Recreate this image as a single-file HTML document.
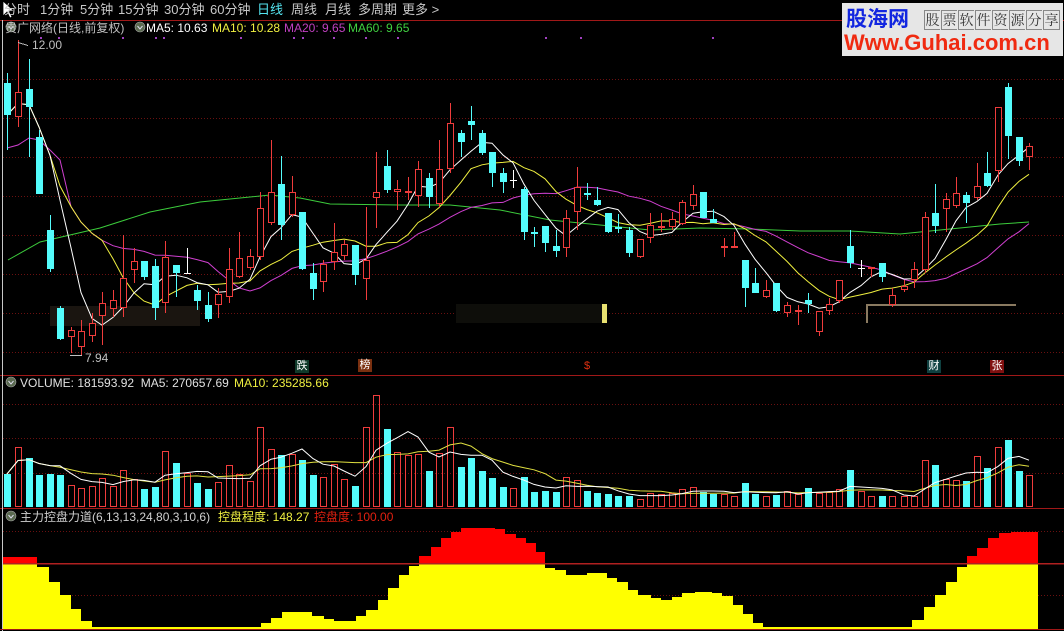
<!DOCTYPE html>
<html><head><meta charset="utf-8">
<style>
html,body{margin:0;padding:0;background:#000;width:1064px;height:631px;overflow:hidden}
body{position:relative;font-family:"Liberation Sans","Noto Sans CJK SC",sans-serif}
svg{position:absolute;left:0;top:0}
.t{position:absolute;white-space:nowrap;font-size:12px;line-height:14px}
.logo{position:absolute;left:842px;top:3px;width:221px;height:53px;background:#e6e6e6;overflow:hidden}
.lb{position:absolute;left:4px;top:3px;font:bold 21px "Noto Sans CJK SC",sans-serif;color:#1226e0;line-height:24px}
.lr{position:absolute;left:82px;top:7px;display:flex}
.lr span{display:block;width:15px;height:18px;border:1px solid #888;border-right:none;font:14px "Noto Serif CJK SC",serif;color:#333;line-height:18px;text-align:center;margin-right:1px}
.lr span:last-child{border-right:1px solid #888}
.lu{position:absolute;left:2px;top:28px;font:bold 22px "Liberation Sans",sans-serif;color:#f02a10;line-height:24px}
.tag{position:absolute;font-size:11px;line-height:13px;width:14px;text-align:center;color:#fff}
</style></head><body>
<svg id="s" width="1064" height="631" xmlns="http://www.w3.org/2000/svg" shape-rendering="crispEdges"></svg>

<div class="t" style="left:4px;top:2px;font-size:13px;line-height:16px;color:#c8c8c8">
<span style="position:absolute;left:0">分时</span>
<span style="position:absolute;left:36px">1分钟</span>
<span style="position:absolute;left:76px">5分钟</span>
<span style="position:absolute;left:114px">15分钟</span>
<span style="position:absolute;left:160px">30分钟</span>
<span style="position:absolute;left:206px">60分钟</span>
<span style="position:absolute;left:253px;color:#54e4f0">日线</span>
<span style="position:absolute;left:287px">周线</span>
<span style="position:absolute;left:321px">月线</span>
<span style="position:absolute;left:354px">多周期</span>
<span style="position:absolute;left:398px">更多 &gt;</span>
</div>
<div class="t" style="left:5px;top:21px;color:#c0c0c0">贵广网络(日线,前复权)</div>
<div class="t" style="left:146px;top:21px;color:#fff">MA5: 10.63</div>
<div class="t" style="left:212px;top:21px;color:#f0f040">MA10: 10.28</div>
<div class="t" style="left:284px;top:21px;color:#c040c0">MA20: 9.65</div>
<div class="t" style="left:348px;top:21px;color:#40d040">MA60: 9.65</div>
<div class="t" style="left:32px;top:38px;color:#c0c0c0">12.00</div>
<div class="t" style="left:85px;top:351px;color:#c0c0c0">7.94</div>
<div class="t" style="left:20px;top:376px;color:#e0e0e0">VOLUME: 181593.92 &nbsp;MA5: 270657.69</div>
<div class="t" style="left:234px;top:376px;color:#f0f040">MA10: 235285.66</div>
<div class="t" style="left:20px;top:510px;color:#d0d0d0">主力控盘力道(6,13,13,24,80,3,10,6)</div>
<div class="t" style="left:218px;top:510px;color:#f0f040">控盘程度: 148.27</div>
<div class="t" style="left:314px;top:510px;color:#e02010">控盘度: 100.00</div>

<div class="tag" style="left:295px;top:360px;background:#0f3a2a">跌</div>
<div class="tag" style="left:358px;top:359px;background:#7a3010">榜</div>
<div class="tag" style="left:580px;top:360px;color:#e03010;background:none">$</div>
<div class="tag" style="left:927px;top:360px;background:#0f4040">财</div>
<div class="tag" style="left:990px;top:360px;background:#801010">张</div>

<div class="logo">
<div class="lb">股海网</div>
<div class="lr"><span>股</span><span>票</span><span>软</span><span>件</span><span>资</span><span>源</span><span>分</span><span>享</span></div>
<div class="lu">Www.Guhai.com.cn</div>
</div>

<script>
var s=document.getElementById('s'),h='';
function L(x1,y1,x2,y2,c,w,d){h+='<line x1="'+x1+'" y1="'+y1+'" x2="'+x2+'" y2="'+y2+'" stroke="'+c+'" stroke-width="'+(w||1)+'"'+(d?' stroke-dasharray="'+d+'"':'')+'/>';}
function R(x,y,w,hh,f){h+='<rect x="'+x+'" y="'+y+'" width="'+w+'" height="'+hh+'" fill="'+f+'"/>';}
function HR(x,y,w,hh,c){R(x,y,w,1,c);R(x,y+hh-1,w,1,c);R(x,y,1,hh,c);R(x+w-1,y,1,hh,c);}
[79,118,157,196,235,274,313,352].forEach(function(y){L(3,y+.5,1064,y+.5,'#6a1010',1,'1 2');});
[404,438,473].forEach(function(y){L(3,y+.5,1064,y+.5,'#6a1010',1,'1 2');});
[531,595].forEach(function(y){L(3,y+.5,1064,y+.5,'#6a1010',1,'1 2');});
L(0,20.5,1064,20.5,'#a01818',1);L(0,375.5,1064,375.5,'#a01818',1);L(0,508.5,1064,508.5,'#a01818',1);
L(2.5,20,2.5,631,'#c8c8c8',1);
[40,58,122,155,163,240,293,302,333,365,397,545,580,712].forEach(function(x){R(x,37,2,2,'#a040c0');});
R(456,304,148,19,'#0e0e0a');R(602,304,5,19,'#e8e070');
R(866,304,150,2,'#8a7a60');R(866,304,2,19,'#8a7a60');
R(50,306,150,20,'#1a1510');
var C=[[7,83,115,73,150,'c'],[18,92,117,40,127,'r'],[29,89,107,59,157,'c'],[39,137,194,130,194,'c'],[50,230,269,215,272,'c'],[60,308,339,306,340,'c'],[71,330,337,327,353,'r'],[81,331,347,320,355,'r'],[92,323,336,313,342,'r'],[102,303,316,292,345,'r'],[113,300,309,290,317,'r'],[123,278,308,235,317,'r'],[134,261,270,248,283,'r'],[144,261,277,261,280,'c'],[155,266,308,259,320,'c'],[165,257,303,241,313,'r'],[176,265,273,265,297,'c'],[187,273,274,248,274,'w'],[197,290,301,285,310,'c'],[208,305,319,292,322,'c'],[218,294,305,288,318,'r'],[229,269,297,248,303,'r'],[239,258,277,232,278,'r'],[250,256,268,249,270,'r'],[260,208,257,192,260,'r'],[271,192,223,140,225,'r'],[281,184,225,156,240,'c'],[292,192,215,176,217,'r'],[302,212,269,212,270,'c'],[313,273,289,263,300,'c'],[323,264,282,260,292,'r'],[334,252,262,223,270,'r'],[344,244,256,240,260,'r'],[355,245,275,245,285,'c'],[366,260,279,207,300,'r'],[376,192,198,152,228,'r'],[387,166,190,150,193,'c'],[397,189,192,180,210,'r'],[408,191,193,177,200,'r'],[418,169,196,161,207,'r'],[429,178,197,173,208,'c'],[439,169,204,140,207,'r'],[450,123,169,103,173,'r'],[461,133,142,130,157,'c'],[471,121,125,106,140,'c'],[482,133,153,130,155,'c'],[492,152,173,152,187,'c'],[503,173,182,168,193,'c'],[513,180,181,170,188,'w'],[524,189,232,187,240,'c'],[534,232,234,227,247,'c'],[545,226,243,226,252,'c'],[556,246,251,230,257,'c'],[566,218,248,210,257,'r'],[577,187,212,167,230,'r'],[587,193,195,183,200,'c'],[597,200,205,187,206,'c'],[608,213,232,213,233,'c'],[618,227,229,214,233,'c'],[629,230,253,227,257,'c'],[640,239,257,239,258,'r'],[650,225,238,213,243,'r'],[661,226,228,213,232,'r'],[672,219,227,212,230,'r'],[682,202,224,200,225,'r'],[693,194,206,185,210,'r'],[703,192,218,192,218,'c'],[713,219,223,209,223,'c'],[724,246,248,238,257,'r'],[734,246,248,232,248,'r'],[745,260,288,260,307,'c'],[755,283,293,268,293,'c'],[766,290,297,280,298,'r'],[776,283,311,283,312,'c'],[787,305,313,302,317,'r'],[798,310,312,305,325,'r'],[808,300,304,293,313,'c'],[819,311,332,311,336,'r'],[829,304,311,298,315,'r'],[839,280,301,280,303,'r'],[850,246,263,230,268,'c'],[861,268,270,260,277,'w'],[871,267,269,267,277,'r'],[882,263,277,263,282,'c'],[892,295,305,288,307,'r'],[904,286,290,280,292,'r'],[914,269,280,262,288,'r'],[925,217,270,212,273,'r'],[935,213,226,184,233,'c'],[946,199,209,193,232,'r'],[956,193,206,177,208,'r'],[966,195,203,192,223,'c'],[977,186,198,163,200,'r'],[987,173,186,152,187,'c'],[998,107,171,107,182,'r'],[1008,87,136,83,159,'c'],[1019,137,161,137,166,'c'],[1029,146,157,143,170,'r']];
var V=[474,447,458,475,474,475,485,488,486,478,486,470,479,489,487,451,463,473,483,489,482,465,474,481,427,449,455,454,460,475,477,464,479,486,427,395,429,452,455,454,471,453,427,467,458,471,478,487,488,477,492,491,492,477,480,491,493,494,496,496,499,493,494,493,489,487,492,494,494,496,483,494,496,495,491,494,488,493,492,489,470,491,496,496,496,496,496,460,465,479,480,481,456,468,447,440,471,475];
var RED='#f03c3c',CY='#54fcfc';
var cl=C.map(function(c){return c[5]=='r'?c[1]:c[2];});
function ma(arr,n){return arr.map(function(v,i){var a=Math.max(0,i-n+1),sum=0;for(var k=a;k<=i;k++)sum+=arr[k];return sum/(i-a+1);});}
function PL(xs,ys,c){var p=xs.map(function(x,i){return x+','+ys[i].toFixed(1);}).join(' ');h+='<polyline shape-rendering="auto" points="'+p+'" fill="none" stroke="'+c+'" stroke-width="1"/>';}
var xs=C.map(function(c){return c[0];});
h+='<polyline shape-rendering="auto" points="8,260 40,242 100,228 150,212 200,202 270,195 300,198 330,204 400,205 450,205 500,210 550,220 600,225 650,230 700,228 750,229 800,231 850,231 900,234 950,229 1000,224 1029,222" fill="none" stroke="#3ccc3c"/>';
var m20=ma(cl,20);for(var i=0;i<6;i++)m20[i]=[148,145,138,140,150,160][i];
PL(xs,m20,'#d040d0');
PL(xs,ma(cl,10),'#f0f040');
PL(xs,ma(cl,5),'#ffffff');
C.forEach(function(c,i){
 var x=c[0],col=c[5]=='r'?RED:(c[5]=='c'?CY:'#fff');
 R(x,c[3],1,c[4]-c[3],col);
 if(c[5]=='c'){R(x-3,c[1],7,Math.max(1,c[2]-c[1]),CY);}
 else if(c[5]=='r'){ if(c[2]-c[1]<3){R(x-3,c[1],7,2,RED);} else {R(x-3,c[1],7,c[2]-c[1],'#000');R(x,c[3],1,c[1]-c[3],RED);R(x,c[2],1,c[4]-c[2],RED);HR(x-3,c[1],7,c[2]-c[1],RED);}}
 else {R(x-3,c[1],7,1,'#fff');}
 var t=V[i];
 if(c[5]=='c')R(x-3,t,7,507-t,CY); else HR(x-3,t,7,507-t,RED);
});
PL(xs,ma(V,10),'#e0e040');PL(xs,ma(V,5),'#ffffff');
L(18,42.5,28,45.5,'#c0c0c0');L(70,355.5,82,355.5,'#c0c0c0');
var st=[[3,563,557],[37,567],[49,582],[60,595],[71,609],[81,621],[92,627],[261,623],[271,618],[282,612],[312,616],[324,619],[334,621],[356,616],[366,610],[378,600],[388,588],[399,575],[409,566],[419,563,556],[431,563,547],[441,563,538],[451,563,532],[461,563,528],[495,563,529],[505,563,534],[516,563,538],[526,563,543],[536,563,552],[545,568],[555,570],[566,575],[587,573],[607,578],[617,582],[628,590],[638,595],[651,598],[661,600],[672,597],[682,593],[695,592],[712,593],[722,596],[733,605],[743,614],[753,623],[763,627],[912,620],[924,607],[935,595],[946,582],[957,567],[967,563,556],[977,563,548],[988,563,538],[999,563,533],[1011,563,532],[1038,0]];
for(var i=0;i<st.length-1;i++){var a=st[i],x1=a[0],x2=st[i+1][0];
 R(x1,a[1],x2-x1,629-a[1],'#ffff00');
 if(a[2])R(x1,a[2],x2-x1,a[1]-a[2],'#ff0000');}
L(3,563.5,1064,563.5,'#b02020',1.5);
L(0,629.5,1064,629.5,'#a01818',1);
[[11,27],[11,382],[11,516],[140,27]].forEach(function(p){h+='<g shape-rendering="auto"><circle cx="'+p[0]+'" cy="'+p[1]+'" r="5" fill="#5a6a50" stroke="#aaa" stroke-width=".6"/><path d="M'+(p[0]-2.5)+' '+(p[1]-1)+' L'+p[0]+' '+(p[1]+2)+' L'+(p[0]+2.5)+' '+(p[1]-1)+'" stroke="#dde" fill="none" stroke-width="1"/></g>';});
h+='<path shape-rendering="auto" d="M3 1 L3 16 L7 12 L10 18 L12 17 L9 11 L14 11 Z" fill="#fff" stroke="#000" stroke-width=".8"/>';
s.innerHTML=h;
</script>
</body></html>
